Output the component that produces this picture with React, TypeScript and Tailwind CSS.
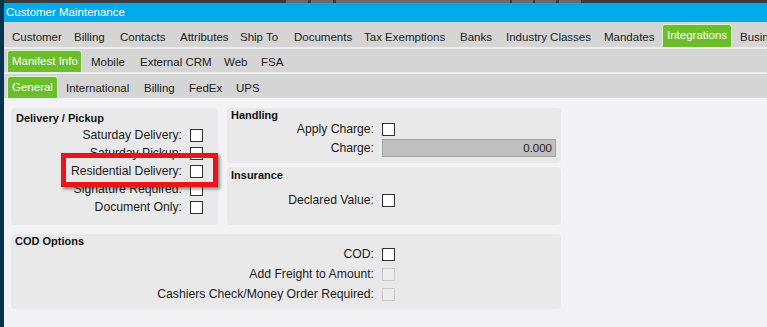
import React from 'react';

type TabDef = { label: string; cls: string; active?: boolean };

const row1: TabDef[] = [
  { label: 'Customer', cls: 'w-[62px] pl-[6px]' },
  { label: 'Billing', cls: 'w-[46px] pl-[6px]' },
  { label: 'Contacts', cls: 'w-[60px] pl-[6px]' },
  { label: 'Attributes', cls: 'w-[60px] pl-[6px]' },
  { label: 'Ship To', cls: 'w-[54px] pl-[6px]' },
  { label: 'Documents', cls: 'w-[70px] pl-[6px]' },
  { label: 'Tax Exemptions', cls: 'w-[96px] pl-[6px]' },
  { label: 'Banks', cls: 'w-[46px] pl-[6px]' },
  { label: 'Industry Classes', cls: 'w-[98px] pl-[6px]' },
  { label: 'Mandates', cls: 'w-[64px] pl-[6px]' },
  { label: 'Integrations', cls: 'w-[70px] pl-[4px]', active: true },
  { label: 'Busin', cls: 'pl-[8px]' },
];

const row2: TabDef[] = [
  { label: 'Manifest Info', cls: 'w-[75px] pl-[4px]', active: true },
  { label: 'Mobile', cls: 'w-[52px] pl-[9px]' },
  { label: 'External CRM', cls: 'w-[84px] pl-[6px]' },
  { label: 'Web', cls: 'w-[37px] pl-[6px]' },
  { label: 'FSA', cls: 'pl-[6px]' },
];

const row3: TabDef[] = [
  { label: 'General', cls: 'w-[51px] pl-[4px]', active: true },
  { label: 'International', cls: 'w-[80px] pl-[8px]' },
  { label: 'Billing', cls: 'w-[45px] pl-[6px]' },
  { label: 'FedEx', cls: 'w-[47px] pl-[6px]' },
  { label: 'UPS', cls: 'pl-[6px]' },
];

const TabStrip: React.FC<{ tabs: TabDef[]; band: string; onCls: string; offCls: string }> = ({
  tabs,
  band,
  onCls,
  offCls,
}) => (
  <div className={`flex items-end bg-[#d5d5d5] overflow-hidden whitespace-nowrap ${band}`}>
    {tabs.map((t) =>
      t.active ? (
        <div
          key={t.label}
          className={`shrink-0 self-end bg-[#6cbd2c] border border-b-0 border-[#dcf0cc] rounded-t-[3px] text-white leading-[14px] ${onCls} ${t.cls}`}
        >
          {t.label}
        </div>
      ) : (
        <div key={t.label} className={`shrink-0 self-end text-[#1c1c1c] leading-[14px] ${offCls} ${t.cls}`}>
          {t.label}
        </div>
      )
    )}
  </div>
);

const Box: React.FC<{ disabled?: boolean }> = ({ disabled }) =>
  disabled ? (
    <div className="w-[13px] h-[13px] shrink-0 border border-[#cacaca] bg-[#ededed]" />
  ) : (
    <div className="w-[13px] h-[13px] shrink-0 border border-[#333] bg-white" />
  );

const Field: React.FC<{ label: string; labelW: string; rowH: string; children: React.ReactNode }> = ({
  label,
  labelW,
  rowH,
  children,
}) => (
  <div className={`flex items-center ${rowH}`}>
    <div className={`text-right text-[12.2px] text-[#1c1c1c] whitespace-nowrap ${labelW}`}>{label}</div>
    <div className="ml-[8px] flex items-center">{children}</div>
  </div>
);

export default function App() {
  return (
    <div className="w-[767px] h-[327px] flex overflow-hidden font-['Liberation_Sans',Arial,sans-serif] text-[11.5px]">
      <div className="w-[4px] bg-[#083452] shrink-0" />
      <div className="flex-1 flex flex-col min-w-0">
        {/* window chrome */}
        <div className="h-[3px] bg-[#3b3b3b] flex shrink-0">
          <div className="ml-[282px] w-[22px] bg-[#6b6b6b]" />
          <div className="ml-[3px] w-[22px] bg-[#6b6b6b]" />
          <div className="ml-[3px] w-[174px] bg-[#6b6b6b]" />
          <div className="ml-[2px] w-[21px] bg-[#6b6b6b]" />
          <div className="ml-[2px] w-[21px] bg-[#6b6b6b]" />
          <div className="ml-[3px] w-[22px] bg-[#6b6b6b]" />
        </div>
        <div className="h-[19px] bg-[#00aaeb] text-white leading-[19px] pl-[2px] shrink-0">Customer Maintenance</div>

        <TabStrip tabs={row1} band="h-[25px] pl-[2px]" onCls="h-[23px] pt-[3px]" offCls="h-[23px] pt-[6px]" />
        <div className="h-[2px] bg-[#ececec]" />
        <TabStrip tabs={row2} band="h-[23px] pl-[3px]" onCls="h-[22px] pt-[3px]" offCls="h-[22px] pt-[5px]" />
        <div className="h-[2px] bg-[#ececec]" />
        <TabStrip tabs={row3} band="h-[24px] pl-[3px]" onCls="h-[22px] pt-[3px]" offCls="h-[22px] pt-[5px]" />

        <div className="flex-1 bg-[#f3f3f5] pl-[7px] pt-[10px]">
          <div className="w-[550px] flex flex-col gap-[9px]">
            <div className="flex gap-[9px]">
              {/* Delivery / Pickup */}
              <div className="relative w-[207px] h-[117px] bg-[#e9e9e9] rounded-[4px] pt-[3px]">
                <div className="h-[15px] leading-[15px] pl-[5px] font-bold text-[11px] text-[#111]">Delivery / Pickup</div>
                <Field label="Saturday Delivery:" labelW="w-[171px]" rowH="h-[18px]"><Box /></Field>
                <Field label="Saturday Pickup:" labelW="w-[171px]" rowH="h-[18px]"><Box /></Field>
                <Field label="Residential Delivery:" labelW="w-[171px]" rowH="h-[18px]"><Box /></Field>
                <Field label="Signature Required:" labelW="w-[171px]" rowH="h-[18px]"><Box /></Field>
                <Field label="Document Only:" labelW="w-[171px]" rowH="h-[18px]"><Box /></Field>
                <div className="absolute left-[50px] top-[45px] w-[157px] h-[34px] border-[5px] border-[#e8141c] shadow-[2px_2px_3px_rgba(0,0,0,0.45)]" />
              </div>

              <div className="w-[334px] flex flex-col gap-[4px]">
                {/* Handling */}
                <div className="h-[55px] bg-[#e9e9e9] rounded-[4px] pt-[1px]">
                  <div className="h-[13px] leading-[12px] pl-[4px] font-bold text-[11px] text-[#111]">Handling</div>
                  <Field label="Apply Charge:" labelW="w-[147px]" rowH="h-[14px]"><Box /></Field>
                  <div className="mt-[3px]">
                    <Field label="Charge:" labelW="w-[147px]" rowH="h-[18px]">
                      <div className="w-[174px] h-[18px] bg-[#c0c0c0] border border-[#a3a3a3] text-right pr-[3px] leading-[16px] text-[#1c1c1c]">
                        0.000
                      </div>
                    </Field>
                  </div>
                </div>
                {/* Insurance */}
                <div className="h-[58px] bg-[#e9e9e9] rounded-[4px] pt-[2px]">
                  <div className="h-[12px] leading-[12px] pl-[4px] font-bold text-[11px] text-[#111]">Insurance</div>
                  <div className="mt-[10px]">
                    <Field label="Declared Value:" labelW="w-[147px]" rowH="h-[18px]"><Box /></Field>
                  </div>
                </div>
              </div>
            </div>

            {/* COD Options */}
            <div className="h-[75px] bg-[#e9e9e9] rounded-[4px] pt-[1px]">
              <div className="h-[12px] leading-[12px] pl-[4px] font-bold text-[11px] text-[#111]">COD Options</div>
              <div className="-mt-[3px]">
                <Field label="COD:" labelW="w-[363px]" rowH="h-[20px]"><Box /></Field>
                <Field label="Add Freight to Amount:" labelW="w-[363px]" rowH="h-[20px]"><Box disabled /></Field>
                <Field label="Cashiers Check/Money Order Required:" labelW="w-[363px]" rowH="h-[20px]"><Box disabled /></Field>
              </div>
            </div>
          </div>
        </div>
      </div>
    </div>
  );
}
